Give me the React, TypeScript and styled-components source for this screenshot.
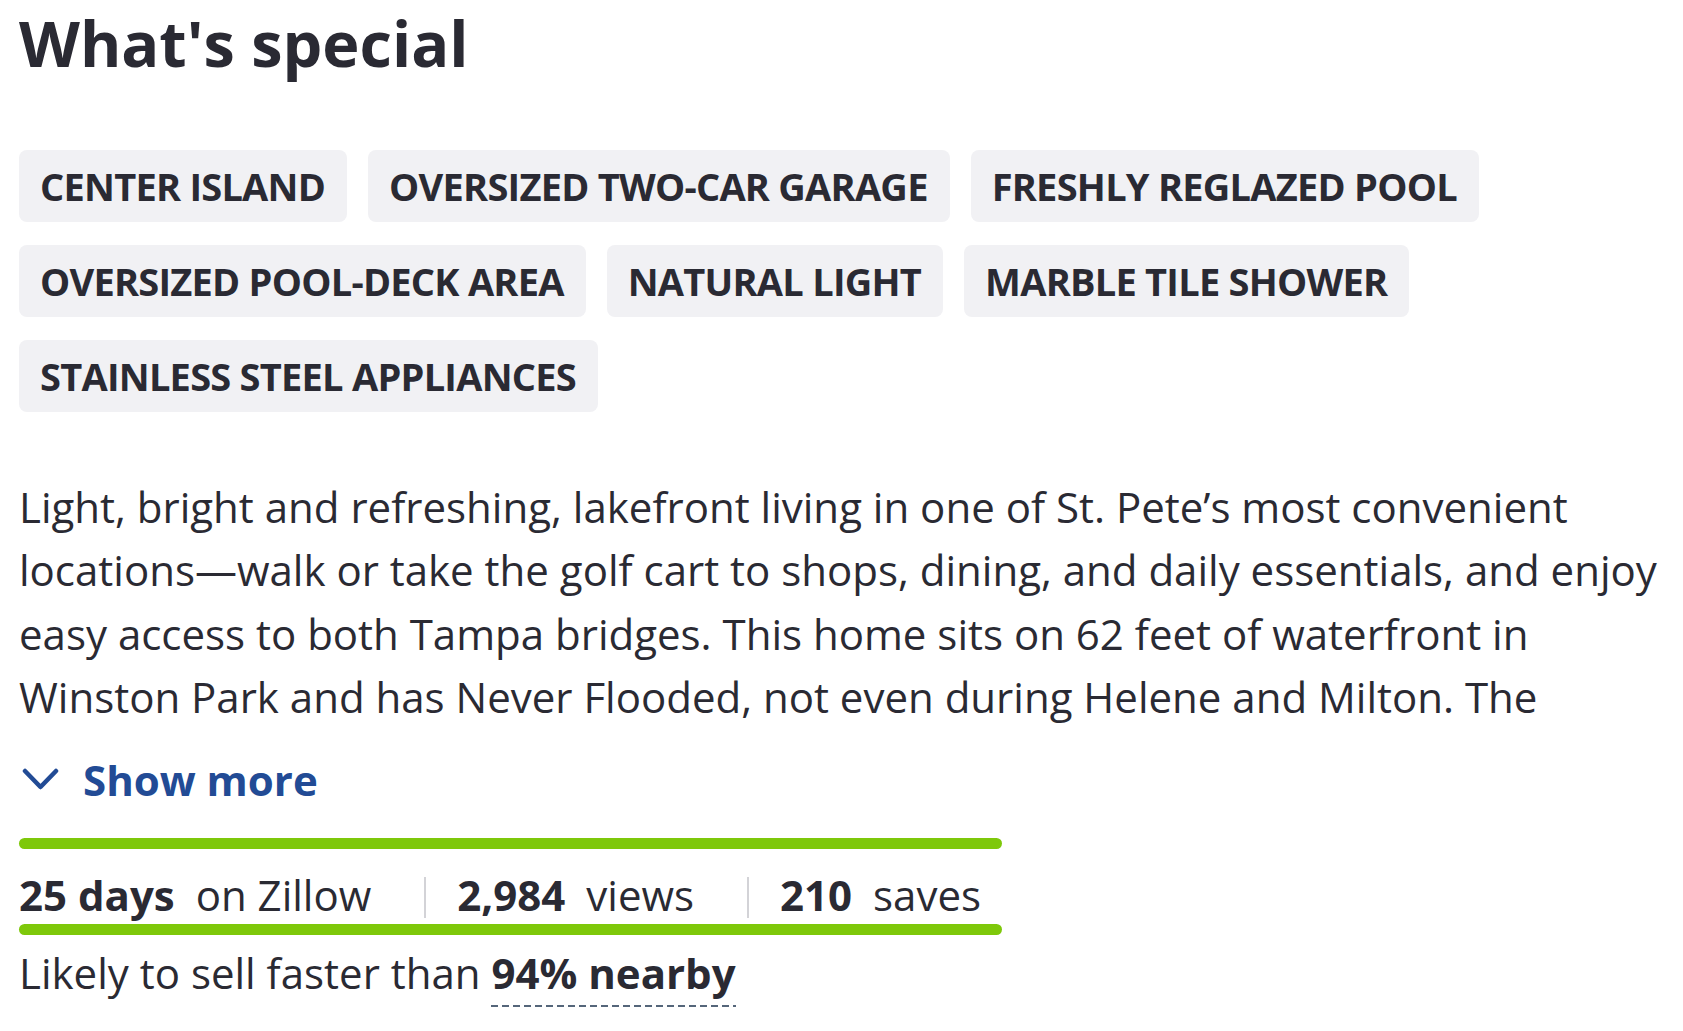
import React from "react";
import styled, { createGlobalStyle } from "styled-components";

const Global = createGlobalStyle`
  html, body { margin: 0; padding: 0; background: #ffffff; }
  body { font-family: "Open Sans", "Noto Sans", sans-serif; color: #2a2a33; }
  * { box-sizing: border-box; }
`;

const Page = styled.div`
  padding: 5px 13px 0 19px;
  display: flex;
  flex-direction: column;
`;

const Heading = styled.h2`
  margin: 0;
  font-size: 63px;
  line-height: 76px;
  font-weight: 700;
  color: #2a2a33;
`;

const ChipList = styled.ul`
  list-style: none;
  margin: 69px 0 0;
  padding: 0;
  display: flex;
  flex-wrap: wrap;
  gap: 23px 21px;
`;

const Chip = styled.li`
  height: 72px;
  padding: 0 22px 0 21px;
  display: flex;
  align-items: center;
  background: #f1f1f4;
  border-radius: 8px;
  font-size: 38px;
  letter-spacing: -0.75px;
  font-weight: 700;
  text-transform: uppercase;
  color: #2a2a33;
  white-space: nowrap;
`;

const Description = styled.p`
  margin: 63px 0 0;
  font-size: 42px;
  line-height: 63.3px;
  max-height: 253.2px;
  overflow: hidden;
  color: #2a2a33;
`;

const ShowMore = styled.button`
  margin-top: 26px;
  padding: 0 0 0 3px;
  border: 0;
  background: none;
  display: flex;
  align-items: center;
  gap: 24px;
  height: 50px;
  font-family: inherit;
  font-size: 42px;
  font-weight: 700;
  color: #224b95;
  cursor: pointer;
  align-self: flex-start;
`;

const Stats = styled.div`
  width: 983px;
  margin-top: 34px;
  display: flex;
  flex-direction: column;
`;

const Marker = styled.div`
  height: 11px;
  border-radius: 6px;
  background: #7ec80a;
`;

const StatRow = styled.div`
  margin-top: 17px;
  height: 58px;
  display: flex;
  align-items: center;
  font-size: 42px;
  line-height: 54px;
`;

const Stat = styled.div<{ $first?: boolean }>`
  display: flex;
  align-items: baseline;
  padding-left: ${(p) => (p.$first ? "0" : "31px")};
  padding-right: 53px;
  white-space: nowrap;
  &:last-child { padding-right: 0; }
`;

const Divider = styled.span`
  width: 2px;
  height: 41px;
  background: #d3d3d7;
  align-self: center;
  margin-top: 5px;
`;

const Strong = styled.b`
  font-weight: 700;
  margin-right: 21px;
`;

const Likely = styled.p`
  margin: 11px 0 0;
  font-size: 42px;
  line-height: 54px;
`;

const Nearby = styled.b`
  display: inline-block;
  font-weight: 700;
  line-height: 54px;
  background-image: repeating-linear-gradient(to right, #55667a 0px, #55667a 7px, transparent 7px, transparent 11px);
  background-position: left bottom;
  background-size: 100% 2px;
  background-repeat: no-repeat;
  height: 61px;
  vertical-align: top;
`;

const chips = [
  "Center island",
  "Oversized two-car garage",
  "Freshly reglazed pool",
  "Oversized pool-deck area",
  "Natural light",
  "Marble tile shower",
  "Stainless steel appliances",
];

export default function App() {
  return (
    <Page>
      <Global />
      <Heading>What's special</Heading>
      <ChipList>
        {chips.map((c) => (
          <Chip key={c}>{c}</Chip>
        ))}
      </ChipList>
      <Description>
        Light, bright and refreshing, lakefront living in one of St. Pete’s most convenient
        locations—walk or take the golf cart to shops, dining, and daily essentials, and enjoy
        easy access to both Tampa bridges. This home sits on 62 feet of waterfront in Winston
        Park and has Never Flooded, not even during Helene and Milton. The
      </Description>
      <ShowMore>
        <svg width="37" height="22" viewBox="0 0 37 22" fill="none">
          <polyline points="3,3 18.5,19 34,3" stroke="#224b95" strokeWidth="4.5" strokeLinecap="round" strokeLinejoin="round" />
        </svg>
        Show more
      </ShowMore>
      <Stats>
        <Marker />
        <StatRow>
          <Stat $first>
            <Strong>25 days</Strong>on Zillow
          </Stat>
          <Divider />
          <Stat>
            <Strong>2,984</Strong>views
          </Stat>
          <Divider />
          <Stat>
            <Strong>210</Strong>saves
          </Stat>
        </StatRow>
        <Marker />
        <Likely>
          Likely to sell faster than <Nearby>94% nearby</Nearby>
        </Likely>
      </Stats>
    </Page>
  );
}
